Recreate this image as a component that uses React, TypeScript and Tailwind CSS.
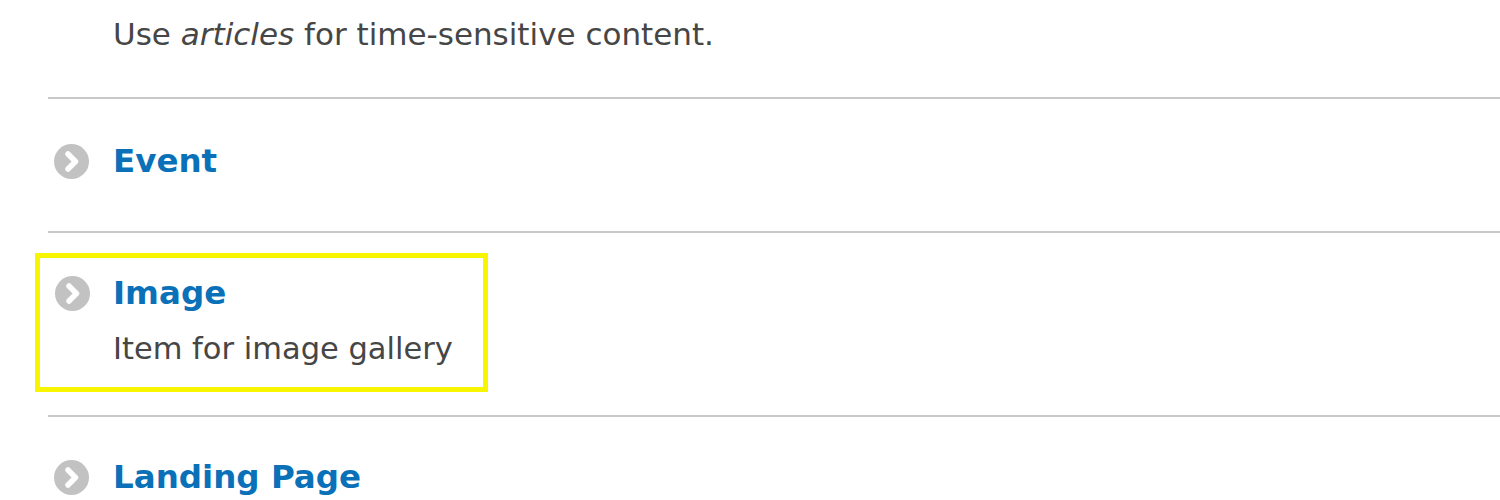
const font = "font-['DejaVu_Sans',Verdana,sans-serif]";

function ArrowIcon() {
  return (
    <svg width="35" height="35" viewBox="0 0 35 35" className="shrink-0">
      <circle cx="17.5" cy="17.5" r="17.5" fill="#c2c2c2" />
      <path
        d="M14 10 L21.5 17.5 L14 25"
        fill="none"
        stroke="#ffffff"
        strokeWidth="5.5"
        strokeLinecap="round"
        strokeLinejoin="round"
      />
    </svg>
  );
}

function TypeTitle({ label }: { label: string }) {
  return (
    <a className="text-[32.5px] leading-[40px] font-bold text-[#0a71b9]">
      {label}
    </a>
  );
}

function Divider() {
  return <div className="h-[2px] bg-[#c8c8c8]" />;
}

export default function App() {
  return (
    <div className={`h-[500px] w-[1500px] overflow-hidden bg-white pl-[48px] ${font}`}>
      {/* intro text */}
      <div className="h-[97px] pl-[65px] pt-[16px]">
        <p className="text-[31px] leading-[36px] text-[#464646]">
          Use <em>articles</em> for time-sensitive content.
        </p>
      </div>

      <Divider />

      {/* Event */}
      <div className="h-[132px] pt-[42px]">
        <div className="flex items-center">
          <div className="w-[65px] pl-[6px]">
            <ArrowIcon />
          </div>
          <TypeTitle label="Event" />
        </div>
      </div>

      <Divider />

      {/* Image (highlighted) */}
      <div className="h-[182px] pt-[20px]">
        <div className="ml-[-13px] h-[139px] w-[453px] border-[5px] border-[#f7f500] pt-[15px]">
          <div className="flex items-center">
            <div className="w-[73px] pl-[15px]">
              <ArrowIcon />
            </div>
            <TypeTitle label="Image" />
          </div>
          <p className="mt-[18px] pl-[73px] text-[30.5px] leading-[36px] text-[#464646]">
            Item for image gallery
          </p>
        </div>
      </div>

      <Divider />

      {/* Landing Page */}
      <div className="pt-[40px]">
        <div className="flex items-center">
          <div className="w-[65px] pl-[6px]">
            <ArrowIcon />
          </div>
          <TypeTitle label="Landing Page" />
        </div>
      </div>
    </div>
  );
}
